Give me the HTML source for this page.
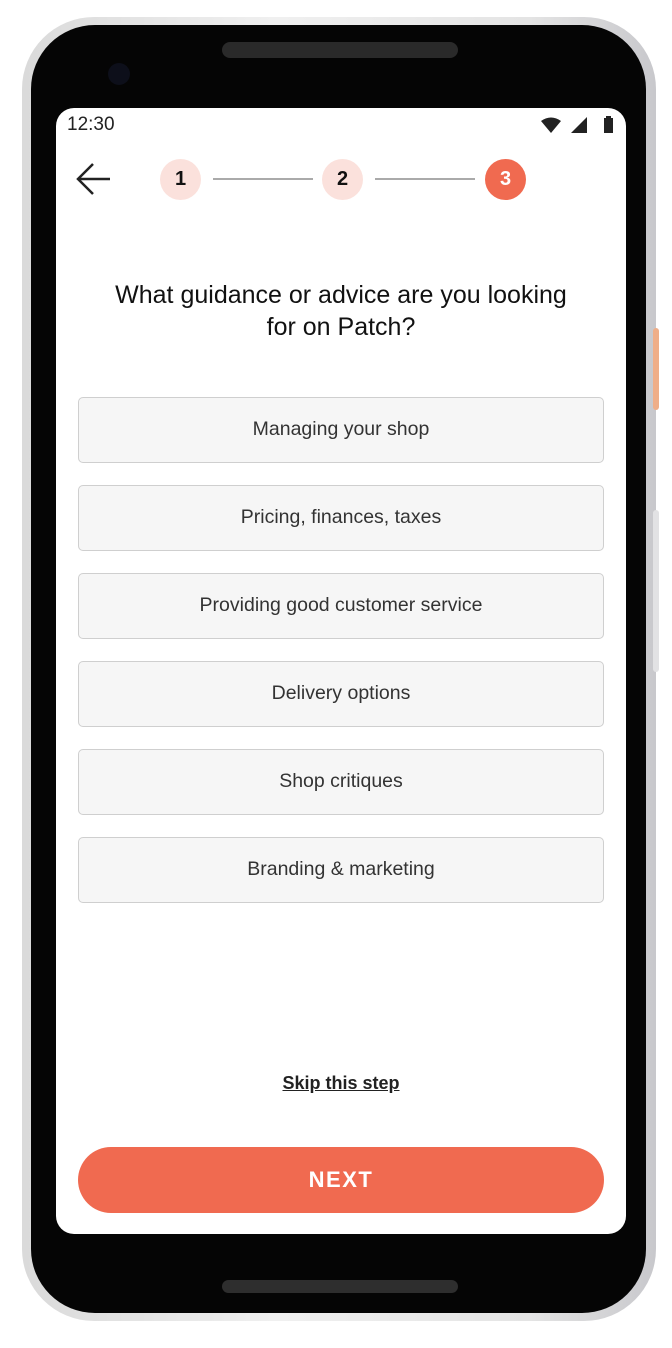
<!DOCTYPE html>
<html><head><meta charset="utf-8"><style>
*{margin:0;padding:0;box-sizing:border-box}
body{width:672px;height:1348px;background:#fff;position:relative;overflow:hidden;font-family:"Liberation Sans",sans-serif}
.frame{position:absolute;left:22px;top:17px;width:634px;height:1304px;border-radius:72px;background:linear-gradient(90deg,#dadada,#f0f0f0 40%,#e4e4e4 80%,#c8c8cc);}
.body{position:absolute;left:31px;top:25px;width:615px;height:1288px;border-radius:64px;background:#050505}
.spk{position:absolute;left:222px;top:42px;width:236px;height:16px;border-radius:8px;background:#2a2a2a}
.spk2{position:absolute;left:222px;top:1280px;width:236px;height:13px;border-radius:7px;background:#2e2e2e}
.cam{position:absolute;left:108px;top:63px;width:22px;height:22px;border-radius:50%;background:#0d0f1a}
.btn1{position:absolute;left:653px;top:328px;width:6px;height:82px;border-radius:3px;background:#efae88}
.btn2{position:absolute;left:653px;top:510px;width:6px;height:162px;border-radius:3px;background:#e2e2e4}
.screen{position:absolute;left:56px;top:108px;width:570px;height:1126px;border-radius:18px;background:#fff;overflow:hidden}
.time{position:absolute;left:11px;top:6px;font-size:19px;color:#222}
.step{position:absolute;top:51px;width:41px;height:41px;border-radius:50%;background:#fbe1dc;color:#111;font-size:20px;font-weight:bold;text-align:center;line-height:41px}
.line{position:absolute;top:70px;height:2px;background:#aaa}
h1{position:absolute;left:0;top:171px;width:570px;text-align:center;font-size:25px;font-weight:normal;color:#111;line-height:32px}
.opt{position:absolute;left:22px;width:526px;height:66px;border:1.5px solid #cfcfcf;border-radius:5px;background:#f6f6f6;text-align:center;line-height:63px;font-size:19.5px;color:#333}
.skip{position:absolute;left:0;width:570px;top:965px;text-align:center;font-size:18px;font-weight:600;color:#222;text-decoration:underline}
.next{position:absolute;left:22px;top:1039px;width:526px;height:66px;border-radius:33px;background:#f06a50;color:#fff;font-weight:bold;font-size:22px;letter-spacing:1.5px;text-align:center;line-height:66px}
</style></head><body>
<div class="frame"></div><div class="body"></div>
<div class="spk"></div><div class="cam"></div><div class="spk2"></div>
<div class="btn1"></div><div class="btn2"></div>
<div class="screen">
<div class="time">12:30</div>
<svg style="position:absolute;left:484px;top:7px" width="84" height="20" viewBox="0 0 84 20">
<path d="M1 6 Q11 -1 21 6 L11 18 Z" fill="#222"/>
<path d="M31 18 L47 18 L47 2 Z" fill="#222"/>
<rect x="64" y="3" width="9" height="15" fill="#222"/><rect x="66" y="1" width="5" height="3" fill="#222"/>
</svg>
<svg style="position:absolute;left:20px;top:54px" width="36" height="34" viewBox="0 0 36 34"><path d="M34 17 H3 M17 2 L2 17 L17 32" stroke="#222" stroke-width="2.5" fill="none"/></svg>
<div class="step" style="left:104px">1</div>
<div class="line" style="left:157px;width:100px"></div>
<div class="step" style="left:266px">2</div>
<div class="line" style="left:319px;width:100px"></div>
<div class="step" style="left:429px;background:#f06a50;color:#fff">3</div>
<h1>What guidance or advice are you looking<br>for on Patch?</h1>
<div class="opt" style="top:289px">Managing your shop</div>
<div class="opt" style="top:377px">Pricing, finances, taxes</div>
<div class="opt" style="top:465px">Providing good customer service</div>
<div class="opt" style="top:553px">Delivery options</div>
<div class="opt" style="top:641px">Shop critiques</div>
<div class="opt" style="top:729px">Branding &amp; marketing</div>
<div class="skip">Skip this step</div>
<div class="next">NEXT</div>
</div>
</body></html>
